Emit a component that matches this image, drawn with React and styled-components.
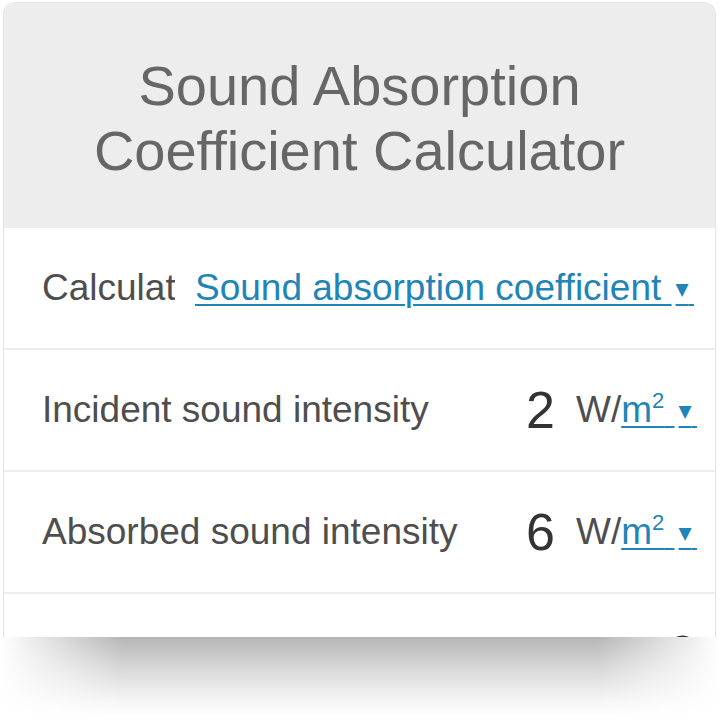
import React from "react";
import styled, { createGlobalStyle } from "styled-components";

const GlobalStyle = createGlobalStyle`
  html, body {
    margin: 0;
    padding: 0;
    background: #fff;
  }
  body {
    font-family: "Liberation Sans", Arial, sans-serif;
  }
`;

const Page = styled.div`
  width: 720px;
  height: 720px;
  padding: 2px 4px 0 3px;
  box-sizing: border-box;
  display: flex;
  flex-direction: column;
  overflow: hidden;
`;

const Card = styled.div`
  flex: none;
  height: 635px;
  box-sizing: border-box;
  border: 1px solid #e4e4e4;
  border-bottom: none;
  border-radius: 12px 12px 0 0;
  overflow: hidden;
  background: #fff;
  display: flex;
  flex-direction: column;
`;

const Header = styled.div`
  flex: none;
  height: 225px;
  background: #ededed;
  display: flex;
  align-items: center;
  justify-content: center;
`;

const Title = styled.h1`
  margin: 0;
  font-weight: 400;
  font-size: 56px;
  line-height: 65px;
  color: #666;
  text-align: center;
  padding-top: 4px;
`;

const Row = styled.div`
  flex: none;
  height: 120px;
  border-bottom: 2px solid #eeeeee;
  display: flex;
  align-items: center;
  padding: 0 18px 0 38px;
  font-size: 37px;
  color: #4e4e4e;
`;

const Label = styled.span`
  flex: ${p => (p.$clip ? "none" : "1")};
  width: ${p => (p.$clip ? `${p.$clip}px` : "auto")};
  overflow: hidden;
  white-space: nowrap;
`;

const Select = styled.span`
  color: #1f84b7;
  text-decoration: underline;
  text-decoration-thickness: 2px;
  text-underline-offset: 4px;
  white-space: nowrap;
  margin-left: ${p => p.$gap || 0}px;
`;

const Caret = styled.span`
  font-family: "DejaVu Sans", sans-serif;
  font-size: 17px;
  vertical-align: 5px;
  margin-left: 4px;
`;

const Value = styled.span`
  font-size: 52px;
  color: #333;
  margin-right: ${p => p.$gap ?? 21}px;
`;

const Unit = styled.span`
  white-space: nowrap;
`;

const Sup = styled.sup`
  font-size: 22px;
  vertical-align: 14px;
  line-height: 0;
`;

const Shadow = styled.div`
  flex: none;
  height: 80px;
  margin: 0 -4px 0 -3px;
  background: linear-gradient(
    to bottom,
    rgba(0, 0, 0, 0.29),
    rgba(0, 0, 0, 0.15) 40%,
    rgba(0, 0, 0, 0.04) 80%,
    rgba(0, 0, 0, 0) 100%
  );
  -webkit-mask-image: linear-gradient(to right, transparent 0, #000 17%, #000 83%, transparent 100%);
  mask-image: linear-gradient(to right, transparent 0, #000 17%, #000 83%, transparent 100%);
`;

const Area = () => (
  <Unit>
    W/
    <Select>
      m<Sup>2</Sup> <Caret>▼{"\u00a0"}</Caret>
    </Select>
  </Unit>
);

export default function App() {
  return (
    <>
      <GlobalStyle />
      <Page>
        <Card>
          <Header>
            <Title>
              Sound Absorption
              <br />
              Coefficient Calculator
            </Title>
          </Header>
          <Row>
            <Label $clip={133}>Calculate</Label>
            <Select $gap={20}>
              Sound absorption coefficient <Caret>▼{"\u00a0"}</Caret>
            </Select>
          </Row>
          <Row>
            <Label>Incident sound intensity</Label>
            <Value>2</Value>
            <Area />
          </Row>
          <Row>
            <Label>Absorbed sound intensity</Label>
            <Value>6</Value>
            <Area />
          </Row>
          <Row>
            <Label>Sound absorption coefficient</Label>
            <Value $gap={0}>3</Value>
          </Row>
        </Card>
        <Shadow />
      </Page>
    </>
  );
}
